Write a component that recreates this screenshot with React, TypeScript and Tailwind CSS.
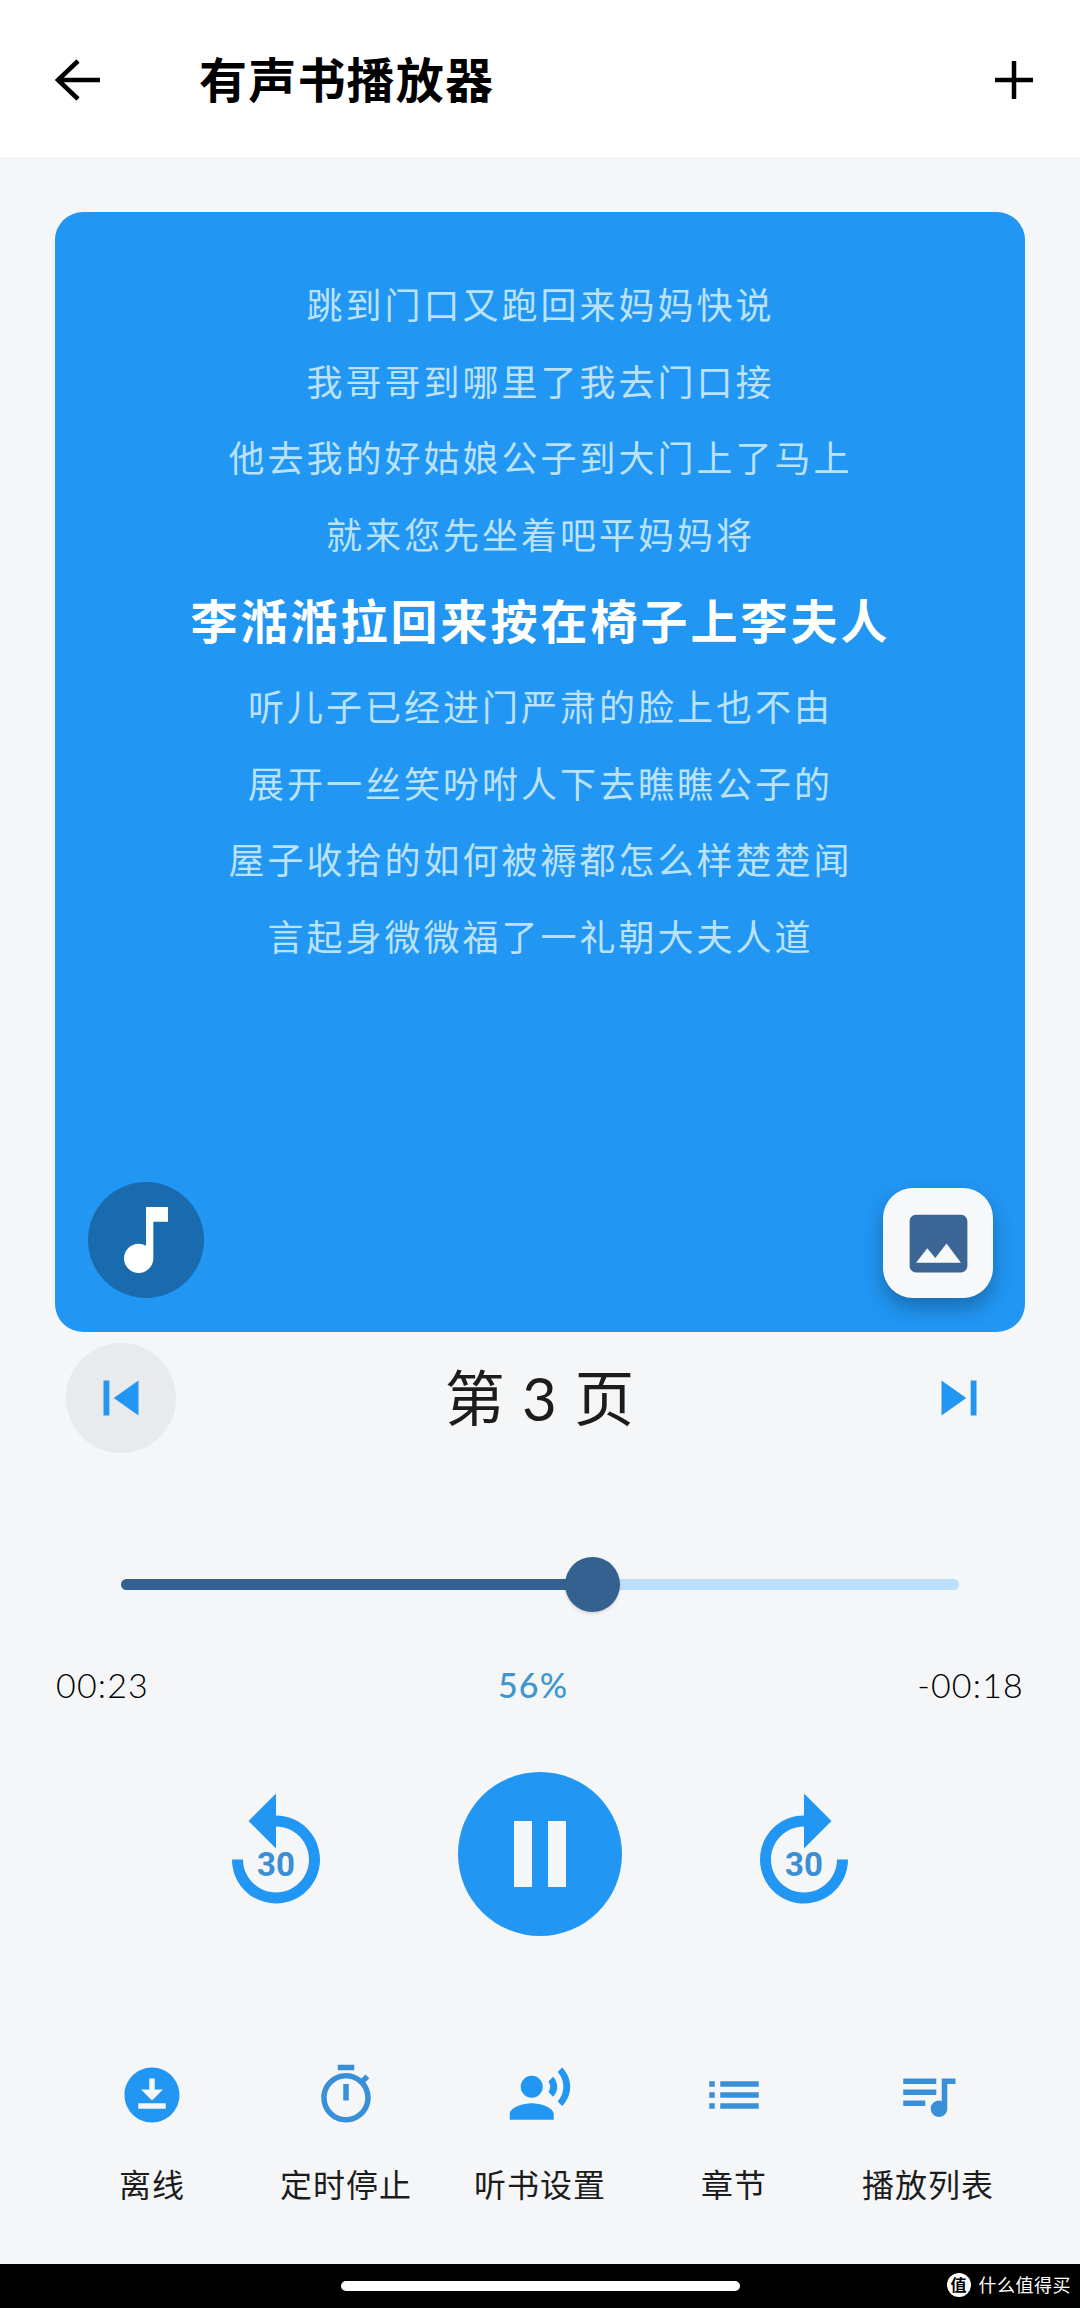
const FONT = "font-['Lato','Noto_Sans_CJK_SC',sans-serif]";

const dimLines = [
  '跳到门口又跑回来妈妈快说',
  '我哥哥到哪里了我去门口接',
  '他去我的好姑娘公子到大门上了马上',
  '就来您先坐着吧平妈妈将',
];

const restLines = [
  '听儿子已经进门严肃的脸上也不由',
  '展开一丝笑吩咐人下去瞧瞧公子的',
  '屋子收拾的如何被褥都怎么样楚楚闻',
  '言起身微微福了一礼朝大夫人道',
];

const paths = {
  replay: 'M12 5V1L7 6l5 5V7c3.31 0 6 2.69 6 6s-2.69 6-6 6-6-2.69-6-6H4c0 4.42 3.58 8 8 8s8-3.58 8-8-3.58-8-8-8z',
  forward: 'M12 5V1l5 5-5 5V7c-3.31 0-6 2.69-6 6s2.69 6 6 6 6-2.69 6-6h2c0 4.42-3.58 8-8 8s-8-3.58-8-8 3.58-8 8-8z',
  skipPrev: 'M6 6h2v12H6zm3.5 6l8.5 6V6z',
  skipNext: 'M6 18l8.5-6L6 6v12zM16 6v12h2V6h-2z',
  note: 'M12 3v10.55c-.59-.34-1.27-.55-2-.55-2.21 0-4 1.79-4 4s1.79 4 4 4 4-1.79 4-4V7h4V3h-6z',
  image: 'M21 19V5c0-1.1-.9-2-2-2H5c-1.1 0-2 .9-2 2v14c0 1.1.9 2 2 2h14c1.1 0 2-.9 2-2zM8.5 13.5l2.5 3.01L14.5 12l4.5 6H5l3.5-4.5z',
  offline: 'M12 2C6.49 2 2 6.49 2 12s4.49 10 10 10 10-4.49 10-10S17.51 2 12 2zm-1 8V6h2v4h3l-4 4-4-4h3zm6 7H7v-2h10v2z',
  timer: 'M15 1H9v2h6V1zm-4 13h2V8h-2v6zm8.03-6.61l1.42-1.42c-.43-.51-.9-.99-1.41-1.41l-1.42 1.42C16.07 4.74 14.12 4 12 4c-4.97 0-9 4.03-9 9s4.02 9 9 9 9-4.03 9-9c0-2.12-.74-4.07-1.97-5.61zM12 20c-3.87 0-7-3.13-7-7s3.13-7 7-7 7 3.13 7 7-3.13 7-7 7z',
  voice: 'M5 9a4 4 0 1 0 8 0a4 4 0 1 0-8 0zM9 15c-2.67 0-8 1.34-8 4v2h16v-2c0-2.66-5.33-4-8-4zm7.76-9.64l-1.68 1.69c.84 1.18.84 2.71 0 3.89l1.68 1.69c2.02-2.02 2.02-5.07 0-7.27zM20.07 2l-1.63 1.63c2.77 3.02 2.77 7.56 0 10.74L20.07 16c3.9-3.89 3.91-9.95 0-14z',
  list: 'M3 13h2v-2H3v2zm0 4h2v-2H3v2zm0-8h2V7H3v2zm4 4h14v-2H7v2zm0 4h14v-2H7v2zM7 7v2h14V7H7z',
  queue: 'M15 6H3v2h12V6zm0 4H3v2h12v-2zM3 16h8v-2H3v2zM17 6v8.18c-.31-.11-.65-.18-1-.18-1.66 0-3 1.34-3 3s1.34 3 3 3 3-1.34 3-3V8h3V6h-5z',
};

const actions = [
  { label: '离线', icon: paths.offline, color: 'text-[#2196f3]' },
  { label: '定时停止', icon: paths.timer, color: 'text-[#3a90d8]' },
  { label: '听书设置', icon: paths.voice, color: 'text-[#2196f3]' },
  { label: '章节', icon: paths.list, color: 'text-[#3a90d8]' },
  { label: '播放列表', icon: paths.queue, color: 'text-[#3a90d8]' },
];

function Icon({ d, className }: { d: string; className: string }) {
  return (
    <svg viewBox="0 0 24 24" fill="currentColor" className={className}>
      <path d={d} />
    </svg>
  );
}

function Skip30({ d }: { d: string }) {
  return (
    <div className="relative w-[132px] h-[132px] text-[#2196f3]">
      <Icon d={d} className="w-[132px] h-[132px]" />
      <span className="absolute inset-0 flex items-center justify-center pt-[21px] text-[33px] font-bold text-[#3d8ed4] font-['Roboto',sans-serif]">
        30
      </span>
    </div>
  );
}

export default function App() {
  return (
    <div className={`flex flex-col w-[1080px] h-[2308px] bg-[#f4f6f8] overflow-hidden ${FONT}`}>
      {/* Header */}
      <div className="flex items-center h-[157px] shrink-0 bg-white pl-[55px] pr-[47px] pt-[3px]">
        <svg viewBox="0 0 45 42" fill="none" stroke="black" strokeWidth="4.5" className="w-[45px] h-[42px]">
          <path d="M45 21H4M23 2L3 21l20 19" />
        </svg>
        <h1 className="ml-[99px] text-[48px] font-bold text-black leading-none tracking-[1.2px]">有声书播放器</h1>
        <svg viewBox="0 0 38 38" fill="none" stroke="black" strokeWidth="4.5" className="ml-auto w-[38px] h-[38px]">
          <path d="M0 19h38M19 0v38" />
        </svg>
      </div>

      {/* Lyrics card */}
      <div className="flex flex-col mt-[55px] mx-[55px] h-[1120px] shrink-0 rounded-[28px] bg-[#2196f3] pt-[55px] pl-[33px] pr-[32px] pb-[34px] text-center">
        {dimLines.map((line) => (
          <p key={line} className="h-[76.5px] leading-[76.5px] text-[36px] tracking-[3px] text-[#bbe2fb]">
            {line}
          </p>
        ))}
        <p className="h-[96px] leading-[96px] text-[47px] tracking-[3px] font-bold text-white whitespace-nowrap">
          李湉湉拉回来按在椅子上李夫人
        </p>
        {restLines.map((line) => (
          <p key={line} className="h-[76.5px] leading-[76.5px] text-[36px] tracking-[3px] text-[#bbe2fb]">
            {line}
          </p>
        ))}
        <div className="flex items-end justify-between mt-auto">
          <div className="flex items-center justify-center w-[116px] h-[116px] rounded-full bg-[#1a6bae] text-white">
            <Icon d={paths.note} className="w-[88px] h-[88px]" />
          </div>
          <div className="flex items-center justify-center w-[110px] h-[110px] rounded-[30px] bg-[#f6f8fa] text-[#3a6595] shadow-[0_10px_20px_rgba(0,0,0,0.28)]">
            <Icon d={paths.image} className="w-[77px] h-[77px]" />
          </div>
        </div>
      </div>

      {/* Page nav */}
      <div className="flex items-center justify-between mt-[11px] mx-[66px] shrink-0">
        <div className="flex items-center justify-center w-[110px] h-[110px] rounded-full bg-[#e8eaec] text-[#2196f3]">
          <Icon d={paths.skipPrev} className="w-[70px] h-[70px]" />
        </div>
        <div className="text-[60px] leading-none text-[#1c1c1c] tracking-[1px]">第 3 页</div>
        <div className="flex items-center justify-center w-[110px] h-[110px] text-[#2196f3]">
          <Icon d={paths.skipNext} className="w-[70px] h-[70px]" />
        </div>
      </div>

      {/* Slider */}
      <div className="mt-[126px] mx-[121px] h-[11px] shrink-0 rounded-full bg-[#bbdefb]">
        <div className="relative w-[472px] h-full rounded-full bg-[#34618f]">
          <div className="absolute top-[-22px] right-[-27px] w-[55px] h-[55px] rounded-full bg-[#34618f] shadow-[0_2px_3px_rgba(0,0,0,0.12)]" />
        </div>
      </div>

      {/* Times */}
      <div className="flex items-center justify-between mt-[75px] mx-[56px] shrink-0 h-[40px] text-[34px] leading-none text-black tracking-[1.2px] font-light">
        <span>00:23</span>
        <span className="text-[#3f97cf] font-medium">56%</span>
        <span>-00:18</span>
      </div>

      {/* Transport */}
      <div className="flex items-center justify-center gap-[116px] mt-[67px] shrink-0">
        <Skip30 d={paths.replay} />
        <div className="flex items-center justify-center gap-[16px] w-[164px] h-[164px] rounded-full bg-[#2196f3]">
          <div className="w-[18px] h-[66px] bg-[#f4f6f8]" />
          <div className="w-[18px] h-[66px] bg-[#f4f6f8]" />
        </div>
        <Skip30 d={paths.forward} />
      </div>

      {/* Actions */}
      <div className="grid grid-cols-5 mt-[126px] mx-[55px] shrink-0">
        {actions.map((a) => (
          <div key={a.label} className="flex flex-col items-center">
            <Icon d={a.icon} className={`w-[66px] h-[66px] ${a.color}`} />
            <span className="mt-[35px] text-[32px] leading-[44px] text-[#1c1c1c] tracking-[1px]">{a.label}</span>
          </div>
        ))}
      </div>

      {/* Home indicator */}
      <div className="relative flex items-center justify-center mt-auto h-[44px] shrink-0 bg-black">
        <div className="w-[399px] h-[10px] rounded-full bg-white" />
        <div className="absolute right-[9px] top-[9px] flex items-center gap-[8px] text-white text-[18px] leading-none">
          <span className="flex items-center justify-center w-[24px] h-[24px] rounded-full bg-white text-black text-[16px] font-bold">值</span>
          <span className="tracking-[0.5px]">什么值得买</span>
        </div>
      </div>
    </div>
  );
}
